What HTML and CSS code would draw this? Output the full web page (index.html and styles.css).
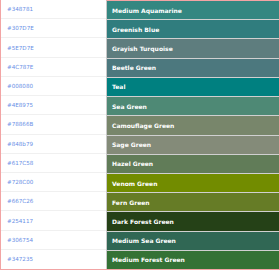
FILE: index.html
```html
<!DOCTYPE html>
<html lang="en">
<head>
    <meta charset="UTF-8">
    <title>Green Colors</title>
    <link rel="stylesheet" href="styles.css">
</head>
<body>

    <!-- Colour table -->
    <div class="swatches">
        <div class="row"><div class="hex">#348781</div><div class="name" style="background-color: #348781;">Medium Aquamarine</div></div>
        <div class="row"><div class="hex">#307D7E</div><div class="name" style="background-color: #307D7E;">Greenish Blue</div></div>
        <div class="row"><div class="hex">#5E7D7E</div><div class="name" style="background-color: #5E7D7E;">Grayish Turquoise</div></div>
        <div class="row"><div class="hex">#4C787E</div><div class="name" style="background-color: #4C787E;">Beetle Green</div></div>
        <div class="row"><div class="hex">#008080</div><div class="name" style="background-color: #008080;">Teal</div></div>
        <div class="row"><div class="hex">#4E8975</div><div class="name" style="background-color: #4E8975;">Sea Green</div></div>
        <div class="row"><div class="hex">#78866B</div><div class="name" style="background-color: #78866B;">Camouflage Green</div></div>
        <div class="row"><div class="hex">#848b79</div><div class="name" style="background-color: #848b79;">Sage Green</div></div>
        <div class="row"><div class="hex">#617C58</div><div class="name" style="background-color: #617C58;">Hazel Green</div></div>
        <div class="row"><div class="hex">#728C00</div><div class="name" style="background-color: #728C00;">Venom Green</div></div>
        <div class="row"><div class="hex">#667C26</div><div class="name" style="background-color: #667C26;">Fern Green</div></div>
        <div class="row"><div class="hex">#254117</div><div class="name" style="background-color: #254117;">Dark Forest Green</div></div>
        <div class="row"><div class="hex">#306754</div><div class="name" style="background-color: #306754;">Medium Sea Green</div></div>
        <div class="row"><div class="hex">#347235</div><div class="name" style="background-color: #347235;">Medium Forest Green</div></div>
    </div>

</body>
</html>
```

FILE: styles.css
```css
body {
    margin: 0;
    padding: 0;
    background: #ffffff;
    font-family: "DejaVu Sans", Verdana, sans-serif;
}

/* Table frame */
.swatches {
    width: 280px;
    height: 270px;
    box-sizing: border-box;
    border-left: 1px solid #f2a4a4;
    border-right: 1px solid #f2a4a4;
    border-bottom: 1px solid #f2a4a4;
    display: flex;
    flex-direction: column;
}

.row {
    flex: 1;
    display: grid;
    grid-template-columns: 105px 1fr;
}

.hex {
    display: flex;
    align-items: center;
    padding-left: 6px;
    font-size: 5.6px;
    color: #6a8fe6;
    border-bottom: 1px solid #f0f0f0;
}

.name {
    display: flex;
    align-items: center;
    padding-left: 5px;
    font-size: 6px;
    font-weight: bold;
    color: #ffffff;
    border-top: 1px solid #d0d0d0;
    border-left: 1px solid #c8c8c8;
}

.row:first-child .name {
    border-top-color: #f2a4a4;
}

.row:last-child .hex {
    border-bottom: none;
}
```
